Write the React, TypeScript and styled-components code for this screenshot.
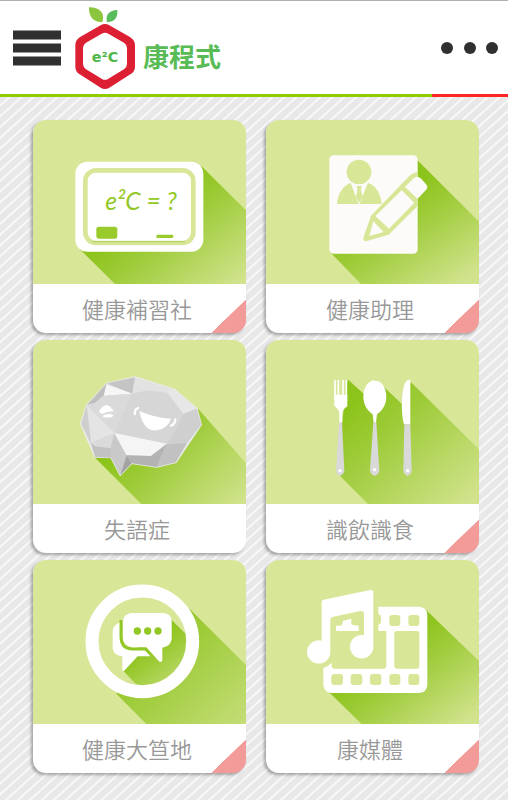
import React from "react";
import styled, { createGlobalStyle } from "styled-components";

const GlobalStyle = createGlobalStyle`
  *, *::before, *::after { box-sizing: border-box; }
  body {
    margin: 0;
    min-height: 100vh;
    background: repeating-linear-gradient(138deg, #e8e8e8 0 5px, #f8f8f8 6px 7px, #e8e8e8 8px);
    font-family: "Noto Sans", "Noto Sans CJK TC", sans-serif;
  }
`;

const TopBar = styled.header`
  display: flex;
  align-items: center;
  height: 94px;
  padding: 0 9px 0 13px;
  background: #fff;
  border-top: 1px solid #b0b0b0;
`;

const IconButton = styled.button`
  display: flex;
  padding: 0;
  border: 0;
  background: none;
  cursor: pointer;
`;

const MoreButton = styled(IconButton)`
  margin-left: auto;
`;

const Brand = styled.a`
  display: flex;
  align-items: center;
  gap: 7px;
  margin-left: 13px;
  color: #58bb55;
  text-decoration: none;
`;

const BrandName = styled.span`
  padding-top: 18px;
  font-size: 26px;
  line-height: 36px;
  font-weight: 700;
`;

const AccentLine = styled.div`
  display: grid;
  grid-template-columns: 85fr 15fr;
  height: 3px;
`;

const Accent = styled.span<{ $color: string }>`
  background: ${(p) => p.$color};
`;

const Tiles = styled.main`
  display: grid;
  grid-template-columns: 1fr 1fr;
  gap: 7px 20px;
  padding: 23px 29px 27px 33px;
`;

const Tile = styled.a<{ $corner: boolean }>`
  display: flex;
  flex-direction: column;
  overflow: hidden;
  border-radius: 13px;
  color: #989898;
  text-decoration: none;
  box-shadow: -2px 2px 3px rgba(0, 0, 0, 0.3);
  background: ${(p) =>
    p.$corner
      ? "linear-gradient(136deg, #fff 50%, #f39b98 51%) right bottom / 35px 34px no-repeat #fff"
      : "#fff"};
`;

const Picture = styled.svg`
  display: block;
  width: 100%;
  background: #d8e697;
`;

const TileName = styled.span`
  height: 49px;
  padding-right: 5px;
  text-align: center;
  font-family: "Noto Sans CJK TC", sans-serif;
  font-size: 22px;
  line-height: 48px;
  font-weight: 350;
`;

const Formula = styled.text`
  font-family: Lato, sans-serif;
  font-size: 74px;
  font-style: italic;
  fill: #92c825;
`;

const LogoText = styled.text`
  font-family: "DejaVu Sans", sans-serif;
  font-size: 43px;
  font-weight: 700;
  fill: #4fb748;
`;

const LEAF = "#d8e697";
const GREEN = "#92c825";

function Shade({ id, from, to }: { id: string; from: [number, number]; to: [number, number] }) {
  return (
    <defs>
      <linearGradient id={id} gradientUnits="userSpaceOnUse" x1={from[0]} y1={from[1]} x2={to[0]} y2={to[1]}>
        <stop offset="0" stopColor="#8dc41c" />
        <stop offset="0.3" stopColor="#9fcc3b" />
        <stop offset="1" stopColor="#d2e38e" />
      </linearGradient>
    </defs>
  );
}

function Board() {
  return (
    <Picture viewBox="41 28 639 492" aria-hidden="true">
      <Shade id="board" from={[400, 290]} to={[610, 560]} />
      <path d="M545 165 L680 299 V520 H287 L182 416Z" fill="url(#board)" />
      <rect x="168" y="153" width="384" height="270" rx="36" fill="#fff" />
      <rect x="198" y="179" width="324" height="218" rx="32" fill="#fff" stroke={LEAF} strokeWidth="14" />
      <path d="M220 393 H496" stroke="#a9d15a" strokeWidth="3" />
      <rect x="231" y="348" width="63" height="36" rx="8" fill="#9acb2d" />
      <rect x="411" y="372" width="51" height="10" rx="4" fill="#9acb2d" />
      <Formula x="365" y="299" textAnchor="middle">e²C = ?</Formula>
    </Picture>
  );
}

function Assistant() {
  return (
    <Picture viewBox="35 28 639 492" aria-hidden="true">
      <Shade id="assistant" from={[410, 270]} to={[590, 540]} />
      <path d="M488 147 L674 333 V520 H320 L228 425Z" fill="url(#assistant)" />
      <rect x="225" y="134" width="265" height="295" rx="13" fill="#fcfbfa" />
      <circle cx="314" cy="184" r="37" fill={LEAF} />
      <path d="M248 280 C250 248 267 224 290 216 L313 280 L340 216 C365 224 380 250 382 280Z" fill={LEAF} />
      <path d="M289 216 L314 282 L341 216 C325 222 304 222 289 216Z" fill="#fcfbfa" />
      <path d="M307 226 H322 L320 237 L325 258 L314 276 L305 258 L309 237Z" fill={LEAF} />
      <path d="M350 315 L467 194 Q480 184 490 185 V286 L403 372 L335 392 Q324 390 328 379Z" fill={LEAF} />
      <path d="M363 316 L442 239 L480 276 L404 354Z M357 332 L388 364 L345 376Z M452 229 L478 203 Q488 193 499 203 L514 219 Q524 229 514 239 L490 264Z" fill="#fcfbfa" />
    </Picture>
  );
}

function Brain() {
  return (
    <Picture viewBox="39 29 639 492" aria-hidden="true">
      <Shade id="brain" from={[340, 320]} to={[600, 590]} />
      <path d="M535 236 L678 399 V521 H364 L225 382Z" fill="url(#brain)" />
      <g transform="translate(165 120)" strokeLinejoin="round">
        <path d="M95 39 L180 20 L298 57 L366 115 L379 163 L303 276 L245 290 L170 279 L136 315 L108 262 L60 260 L17 160 L35 104Z" fill="#dcdcdc" stroke="#ececec" strokeWidth="4" />
        <path d="M95 39 L180 21 L172 70Z" fill="#c4c4c4" />
        <path d="M92 41 L172 70 L86 76Z" fill="#f6f6f6" />
        <path d="M95 39 L35 105 L60 98 L86 76Z" fill="#bfbfbf" />
        <path d="M86 76 L172 70 L118 188 L35 105 L60 98Z" fill="#dadada" />
        <path d="M180 21 L298 57 L275 68 L220 60 L172 70Z" fill="#e2e2e2" />
        <path d="M172 70 L220 60 L275 68 L325 131 L305 175 L275 222 L118 188Z" fill="#d6d6d6" />
        <path d="M275 62 L298 57 L366 115 L325 131Z" fill="#e7e7e7" />
        <path d="M35 105 L118 188 L48 217Z" fill="#e4e4e4" />
        <path d="M18 160 L35 105 L48 217Z" fill="#cecece" />
        <path d="M48 217 L118 188 L108 234 L60 228Z" fill="#dadada" />
        <path d="M48 217 L60 228 L108 234 L108 262 L60 260Z" fill="#c2c2c2" />
        <path d="M118 188 L155 256 L136 315 L108 262 L106 234Z" fill="#c9c9c9" />
        <path d="M118 188 L275 220 L228 257 L155 255Z" fill="#f5f5f5" />
        <path d="M325 131 L366 115 L379 163 L335 218 L275 222 L305 175Z" fill="#cfcfcf" />
        <path d="M275 222 L335 218 L303 276 L245 290Z" fill="#c1c1c1" />
        <path d="M155 255 L228 257 L275 221 L245 290 L170 279Z" fill="#b3b3b3" />
        <path d="M155 255 L170 279 L136 315Z" fill="#a2a2a2" />
        <path d="M193 122 Q240 143 288 145 Q280 172 246 180 Q206 186 193 122Z M72 124 Q82 104 98 104 Q100 110 105 107 Q108 116 118 122 Q98 122 81 131Z M82 137 Q98 126 116 134 Q112 144 99 141 Q90 144 82 137Z" fill="#fff" />
        <path d="M189 113 Q177 118 180 131 M301 147 Q300 162 288 166" fill="none" stroke="#fff" strokeWidth="7" strokeLinecap="round" />
      </g>
    </Picture>
  );
}

function Cutlery() {
  return (
    <Picture viewBox="35 29 639 492" aria-hidden="true">
      <Shade id="cutlery" from={[280, 240]} to={[580, 580]} />
      <path d="M280 147 L328 190 L364 147 L442 220 L470 156 L674 357 V521 H341 L255 435 L263 276Z" fill="url(#cutlery)" />
      <path d="M242 149 V207 M252 149 V207 M266 149 V207 M276 149 V207" stroke="#fff" strokeWidth="5" />
      <path d="M240 193 L279 193 V228 Q263 237 264 253 V277 H255 V251 Q255 237 240 226Z" fill="#fff" />
      <path d="M361 150 C382 150 396 174 396 198 C396 228 380 244 368 252 L365 277 H358 L355 252 C342 242 327 228 327 198 C327 174 341 150 361 150Z" fill="#fff" />
      <path d="M468 149 V282 H449 C438 247 440 150 463 148Z" fill="#fff" />
      <path d="M254 276 H263 L270 421 Q269 431 257 437 Q245 431 245 421Z M357 276 H366 L375 421 Q374 431 361 437 Q348 431 347 421Z M450 282 H468 L472 421 Q471 431 460 437 Q448 431 447 421Z" fill="#d9d9d9" />
      <circle cx="257" cy="421" r="5" fill="#fff" />
      <circle cx="361" cy="418" r="5" fill="#fff" />
      <circle cx="460" cy="421" r="5" fill="#fff" />
    </Picture>
  );
}

function Chat() {
  return (
    <Picture viewBox="40 29 639 492" aria-hidden="true">
      <Shade id="chat" from={[310, 260]} to={[690, 650]} />
      <Shade id="bubbles" from={[370, 290]} to={[490, 450]} />
      <path d="M510 176 L679 344 V521 H380 L290 430Z" fill="url(#chat)" />
      <circle cx="368" cy="272" r="132" fill={LEAF} />
      <path d="M455 208 L499 252 A132 132 0 0 1 351 403 L312 363 L360 280Z" fill="url(#bubbles)" />
      <circle cx="368" cy="273" r="151" fill="none" stroke="#fff" strokeWidth="39" />
      <path d="M305 216 Q279 221 279 246 V294 Q281 315 308 318 V358 Q308 366 315 360 L354 318 H392 L375 299 H335 Q302 295 302 265Z" fill="#fff" />
      <path d="M304 209 V258 Q304 296 339 296 H379 L390 307" fill="none" stroke={GREEN} strokeWidth="9" />
      <path d="M333 188 H433 Q456 191 456 213 V266 Q454 287 428 292 V329 Q426 339 418 333 L380 291 H339 Q310 288 310 260 V213 Q312 191 333 188Z" fill="#fff" />
      <circle cx="353" cy="242" r="11" fill={GREEN} />
      <circle cx="384" cy="242" r="11" fill={GREEN} />
      <circle cx="415" cy="242" r="11" fill={GREEN} />
    </Picture>
  );
}

function Media() {
  return (
    <Picture viewBox="35 30 639 492" aria-hidden="true">
      <Shade id="media" from={[420, 290]} to={[610, 540]} />
      <path d="M512 177 L674 333 V525 H325 L223 425 H508Z" fill="url(#media)" />
      <path d="M372 170 H495 Q519 173 519 195 V405 Q517 427 495 429 H231 Q209 426 207 405 V354 Q222 350 232 338 V350 Q234 356 240 356 H390 Q396 355 396 348 V243 H372 V224 Q380 223 380 213 V202 Q380 194 372 193Z" fill="#fff" />
      <rect x="420" y="243" width="75" height="113" rx="8" fill={LEAF} />
      <g fill={LEAF}>
        <rect x="405" y="195" width="33" height="33" rx="9" />
        <rect x="462" y="195" width="33" height="33" rx="9" />
        <rect x="231" y="372" width="35" height="33" rx="9" />
        <rect x="289" y="372" width="35" height="33" rx="9" />
        <rect x="347" y="372" width="34" height="33" rx="9" />
        <rect x="405" y="372" width="33" height="33" rx="9" />
        <rect x="462" y="372" width="33" height="33" rx="9" />
      </g>
      <path d="M202 156 Q202 150 208 149 L347 120 Q357 119 357 127 V290 A35 35 0 1 1 329 256 V190 Q328 182 318 183 L237 200 Q228 202 228 211 V304 A35 35 0 1 1 202 272Z" fill="#fff" />
      <path d="M245 227 H260 Q265 225 265 213 L291 206 V222 Q294 227 313 227 V243 H245Z" fill="#fff" />
    </Picture>
  );
}

function Logo() {
  return (
    <svg width="62" height="84" viewBox="222 18 186 252" aria-hidden="true">
      <path d="M267 22 C296 21 317 38 307 66 C282 68 266 52 267 22Z" fill="#8cc63f" />
      <path d="M352 30 C329 31 315 44 321 66 C345 67 354 50 352 30Z" fill="#5abb5b" />
      <path d="M302 76 Q315 68 328 76 L391 112 Q405 121 405 136 V200 Q405 215 391 223 L328 263 Q315 271 302 263 L239 223 Q226 215 226 200 V136 Q226 121 239 112Z" fill="#dc1f33" />
      <path d="M305 101 Q315 95 325 101 L372 128 Q381 134 381 144 V192 Q381 202 372 208 L325 236 Q315 243 305 236 L258 208 Q249 202 249 192 V144 Q249 134 258 128Z" fill="#fff" />
      <LogoText x="315" y="186" textAnchor="middle">e²C</LogoText>
    </svg>
  );
}

const tiles = [
  { name: "健康補習社", Art: Board, corner: true },
  { name: "健康助理", Art: Assistant, corner: true },
  { name: "失語症", Art: Brain, corner: false },
  { name: "識飲識食", Art: Cutlery, corner: true },
  { name: "健康大笪地", Art: Chat, corner: true },
  { name: "康媒體", Art: Media, corner: true },
];

export default function App() {
  return (
    <>
      <GlobalStyle />
      <TopBar>
        <IconButton aria-label="選單">
          <svg width="48" height="36" viewBox="0 0 48 36" aria-hidden="true">
            <path d="M0 5H48M0 18H48M0 31H48" stroke="#303030" strokeWidth="9" />
          </svg>
        </IconButton>
        <Brand href="#" aria-label="e²C 康程式">
          <Logo />
          <BrandName>康程式</BrandName>
        </Brand>
        <MoreButton aria-label="更多">
          <svg width="58" height="14" viewBox="0 0 58 14" aria-hidden="true">
            <g fill="#303030">
              <circle cx="6" cy="7" r="6" />
              <circle cx="29" cy="7" r="6" />
              <circle cx="51" cy="7" r="6" />
            </g>
          </svg>
        </MoreButton>
      </TopBar>
      <AccentLine>
        <Accent $color="#91cc00" />
        <Accent $color="#ff2525" />
      </AccentLine>
      <Tiles>
        {tiles.map(({ name, Art, corner }) => (
          <Tile key={name} href="#" $corner={corner}>
            <Art />
            <TileName>{name}</TileName>
          </Tile>
        ))}
      </Tiles>
    </>
  );
}
